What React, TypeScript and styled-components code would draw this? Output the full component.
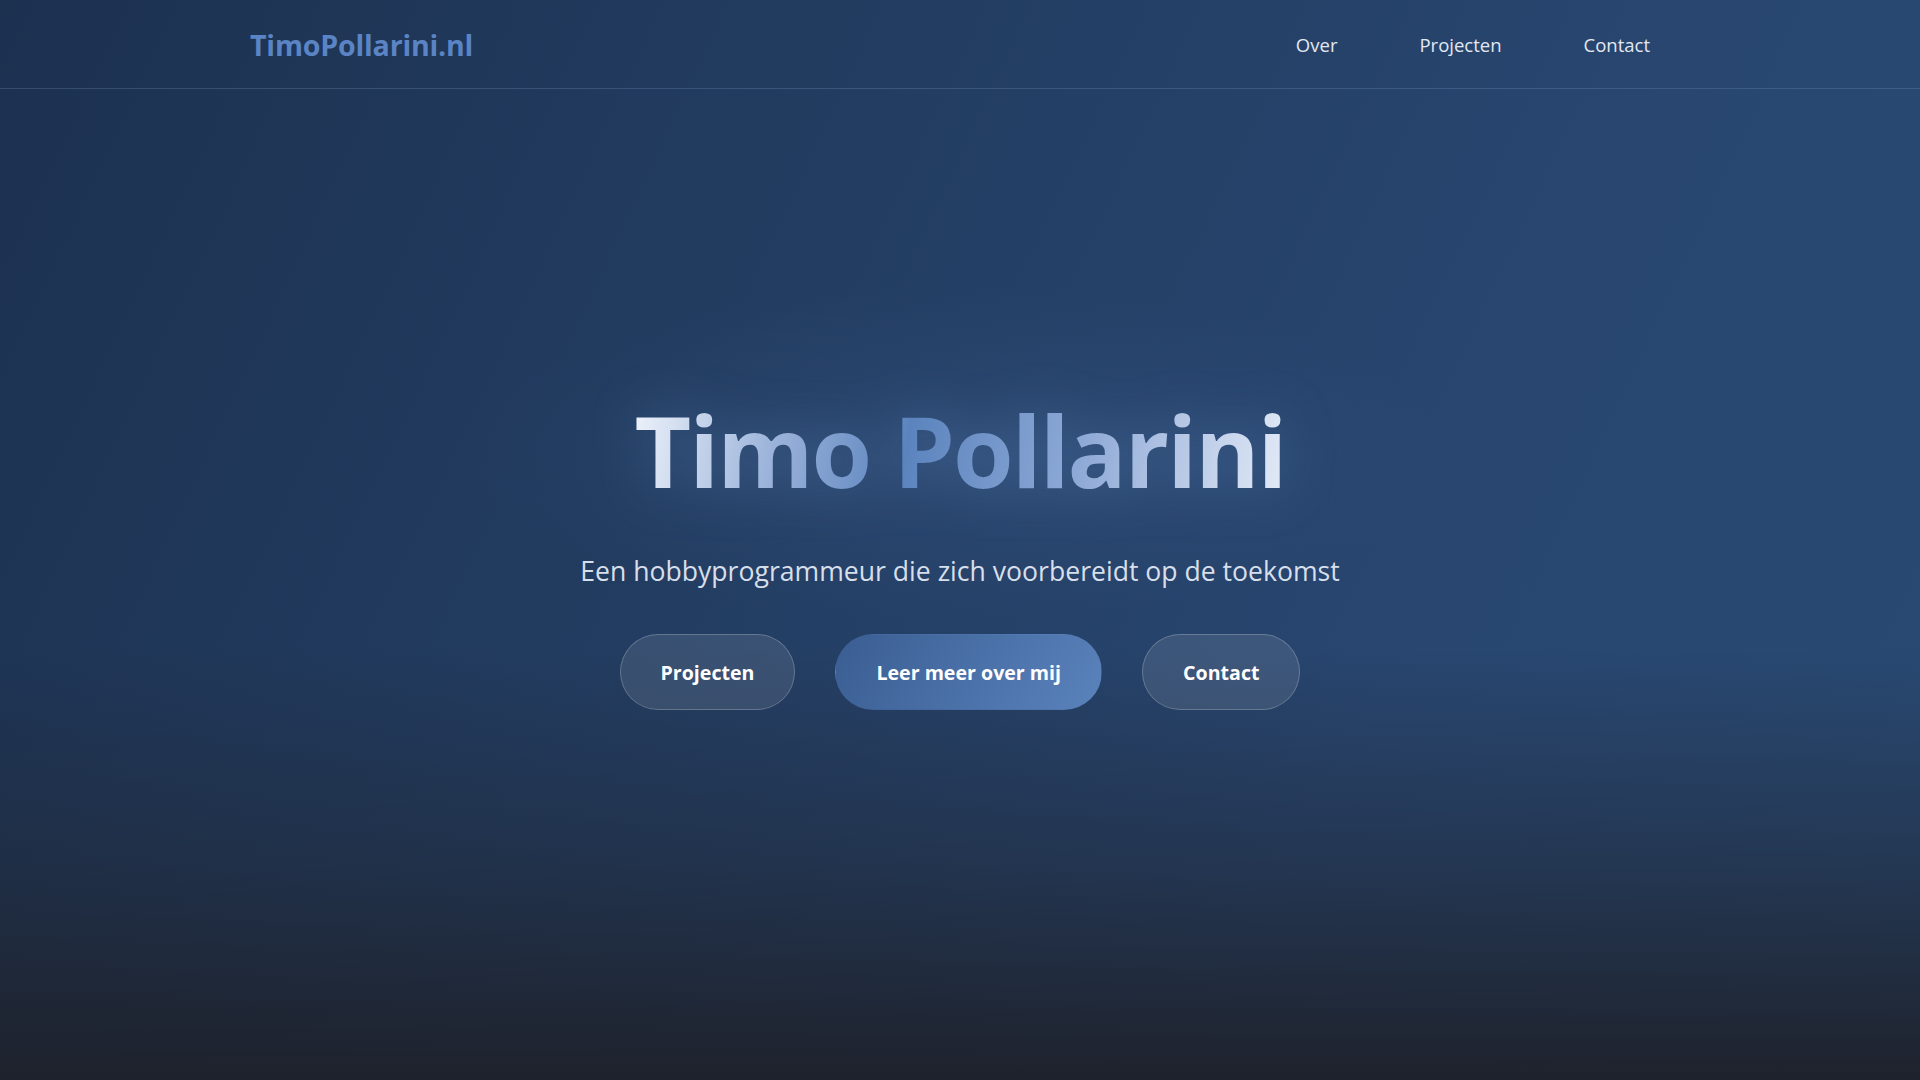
import React from "react";
import styled, { createGlobalStyle } from "styled-components";

const GlobalStyle = createGlobalStyle`
  * { box-sizing: border-box; }
  html, body { margin: 0; padding: 0; }
  body {
    font-family: "Open Sans", "Noto Sans", sans-serif;
    background: #1e2430;
    color: #e6ecf5;
  }
`;

const Page = styled.div`
  min-height: 100vh;
  display: flex;
  flex-direction: column;
  background:
    radial-gradient(ellipse 700px 240px at 50% 42%, rgba(70, 105, 155, 0.22), rgba(70, 105, 155, 0) 70%),
    linear-gradient(180deg, rgba(30, 34, 44, 0) 0%, rgba(30, 34, 44, 0) 60%, rgba(31, 38, 52, 0.5) 80%, rgba(30, 34, 44, 1) 100%),
    linear-gradient(115deg, #1c3150 0%, #223c60 35%, #284670 70%, #294a73 100%);
`;

const NavBar = styled.header`
  height: 89px;
  border-bottom: 1px solid rgba(120, 150, 190, 0.28);
  display: flex;
  align-items: center;
`;

const NavInner = styled.div`
  width: 1420px;
  margin: 0 auto;
  padding-right: 4px;
  display: flex;
  align-items: center;
  justify-content: space-between;
`;

const Logo = styled.a`
  font-size: 28.6px;
  font-weight: 700;
  color: #5b84c4;
  text-decoration: none;
  letter-spacing: -0.2px;
`;

const NavLinks = styled.nav`
  display: flex;
  gap: 50px;
`;

const NavLink = styled.a`
  font-size: 18.5px;
  color: #e2e8f2;
  text-decoration: none;
  padding: 8px 16px;
`;

const Hero = styled.main`
  flex: 1;
  display: flex;
  flex-direction: column;
  align-items: center;
  justify-content: center;
  padding-bottom: 66px;
  text-align: center;
`;

const Title = styled.h1`
  margin: 0;
  font-size: 98px;
  line-height: 1.17;
  font-weight: 700;
  letter-spacing: -2px;
  background: linear-gradient(100deg, #eef3fb 0%, #9bb3da 22%, #5b84be 42%, #8ea9d6 68%, #e4ebf7 100%);
  -webkit-background-clip: text;
  background-clip: text;
  color: transparent;
  filter: drop-shadow(0 0 26px rgba(110, 150, 210, 0.35));
`;

const Subtitle = styled.p`
  margin: 45px 0 0;
  font-size: 26.6px;
  line-height: 1.5;
  color: #d7dfeb;
`;

const Actions = styled.div`
  margin-top: 42px;
  display: flex;
  gap: 40px;
`;

const Button = styled.a<{ $primary?: boolean }>`
  height: 76px;
  padding: 0 40px;
  display: inline-flex;
  align-items: center;
  justify-content: center;
  border-radius: 38px;
  font-size: 19.6px;
  font-weight: 700;
  color: #ffffff;
  text-decoration: none;
  background: ${(p) =>
    p.$primary
      ? "linear-gradient(120deg, #3a5e92 0%, #4a70a8 50%, #5a82bb 100%)"
      : "rgba(255, 255, 255, 0.1)"};
  border: 1px solid ${(p) => (p.$primary ? "transparent" : "rgba(255, 255, 255, 0.22)")};
`;

export default function App() {
  return (
    <>
      <GlobalStyle />
      <Page>
        <NavBar>
          <NavInner>
            <Logo href="#">TimoPollarini.nl</Logo>
            <NavLinks>
              <NavLink href="#over">Over</NavLink>
              <NavLink href="#projecten">Projecten</NavLink>
              <NavLink href="#contact">Contact</NavLink>
            </NavLinks>
          </NavInner>
        </NavBar>
        <Hero>
          <Title>Timo Pollarini</Title>
          <Subtitle>Een hobbyprogrammeur die zich voorbereidt op de toekomst</Subtitle>
          <Actions>
            <Button href="#projecten">Projecten</Button>
            <Button href="#over" $primary>
              Leer meer over mij
            </Button>
            <Button href="#contact">Contact</Button>
          </Actions>
        </Hero>
      </Page>
    </>
  );
}
